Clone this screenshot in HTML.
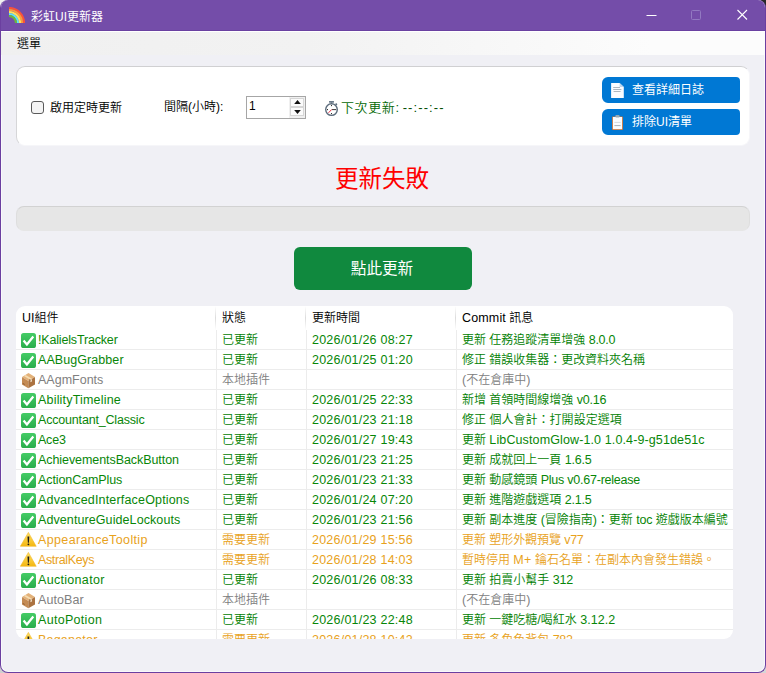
<!DOCTYPE html>
<html lang="zh-Hant"><head><meta charset="utf-8"><title>彩虹UI更新器</title>
<style>
html,body{margin:0;padding:0;}
html{background:#ffffff;}
body{width:766px;height:673px;overflow:hidden;position:relative;font-family:"Liberation Sans","Noto Sans CJK TC",sans-serif;font-size:12px;color:#000;font-weight:350;}
#win{position:absolute;left:0;top:0;width:766px;height:673px;box-sizing:border-box;border:1px solid #6b3fa0;border-top:none;border-radius:8px;background:#f0f0f5;overflow:hidden;box-shadow:inset 0 0 0 1px #f9f9fb;}
#win>*{position:absolute;}
#title{left:-1px;top:0;width:766px;height:31px;background:#744da9;border-bottom:1px solid #6a41a1;box-sizing:border-box;color:#fff;}
#title .t{font-weight:400;position:absolute;left:31px;top:2px;line-height:30px;font-size:12px;white-space:nowrap;}
#menu{left:0;top:31px;width:764px;height:24px;background:linear-gradient(90deg,#f0f0f0 0%,#f2f2f2 40%,#fcfcfc 85%,#fcfcfc 100%);border-top:1px solid #fff;box-sizing:border-box;}
#menu span{position:absolute;left:16px;top:2px;line-height:21px;font-size:12px;}
.panel{left:15px;top:66px;width:734px;height:80px;box-sizing:border-box;background:#fff;border:1px solid #d6d6d8;border-top-color:#d0d0d2;border-right-color:#f6f6f9;border-bottom-color:#f6f6f9;border-radius:9px;}
.cb{left:30px;top:101px;width:13px;height:13px;box-sizing:border-box;border:1px solid #5a5a5a;border-radius:3px;background:#f4f4f4;}
.lbl{white-space:nowrap;line-height:16px;}
.spin{left:245px;top:96px;width:60px;height:23px;box-sizing:border-box;border:1px solid #a6a6a6;background:#fff;}
.spin .v{position:absolute;left:2px;top:-1px;line-height:20px;font-size:12px;}
.spin .b{position:absolute;left:43px;width:14px;height:9px;background:#fbfbfb;border:1px solid #d6d6d6;box-sizing:border-box;}
.btn{left:601px;width:138px;height:26px;background:#0078d4;border-radius:6px 4px 4px 6px;color:#fff;}
.btn span{font-weight:400;position:absolute;left:30px;top:1px;line-height:25px;white-space:nowrap;}
.btn svg{position:absolute;left:8px;top:5px;width:15px;height:17px;}
#status{left:-1px;top:161px;width:764px;text-align:center;font-size:23.5px;font-weight:400;line-height:36px;color:#ff0000;white-space:nowrap;}
#prog{left:15px;top:206px;width:734px;height:25px;box-sizing:border-box;background:#e6e6e6;border:1px solid #dedede;border-top-color:#d2d2d2;border-bottom-color:#e6e6e6;border-radius:8px;}
#go{left:293px;top:247px;width:178px;height:43px;background:#10893e;border-radius:6px;color:#fff;font-size:15.6px;font-weight:400;line-height:43px;text-align:center;white-space:nowrap;text-indent:-2px;}
#tbl{left:15px;top:306px;width:717px;height:333px;background:#fff;border-radius:9px;overflow:hidden;}
#tbl>*{position:absolute;}
.th{top:0;height:24px;line-height:25px;white-space:nowrap;color:#000;}
.hs{top:0;width:1px;height:24px;background:linear-gradient(180deg,#fff 0%,#dcdcdc 50%,#fff 100%);}
.vl{top:24px;width:1px;height:320px;background:#ececec;}
.tr{left:0;width:717px;height:20px;box-sizing:border-box;border-bottom:1px solid #ececec;white-space:nowrap;line-height:21px;}
.tr>*{position:absolute;top:0;}

.c1{left:22px;font-size:12.5px;} .c2{left:206px;} .c3{left:296px;font-size:12.5px;letter-spacing:0.22px;} .c4{left:446px;width:271px;overflow:hidden;} .l{font-size:12.5px;}
.g{color:#008000;} .g .c1,.g .c3,.g .l{color:#078607;} .o{color:#e8a21c;} .y{color:#808080;}
</style></head><body>
<svg width="0" height="0" style="position:absolute"><defs><linearGradient id="gk" x1="0" y1="0" x2="0" y2="1"><stop offset="0" stop-color="#45cc66"/><stop offset="1" stop-color="#2aad4b"/></linearGradient><linearGradient id="gw" x1="0" y1="0" x2="0" y2="1"><stop offset="0" stop-color="#ffe066"/><stop offset="1" stop-color="#f4b70f"/></linearGradient></defs></svg>
<div style="position:absolute;left:0;top:0;width:10px;height:10px;background:#f0f0f0"></div><div style="position:absolute;left:756px;top:0;width:10px;height:10px;background:#282828"></div><div style="position:absolute;left:0;top:663px;width:10px;height:10px;background:#cfcfcf"></div><div style="position:absolute;left:756px;top:663px;width:10px;height:10px;background:#d6d6d6"></div>
<div id="win">
 <div id="title">
  <svg style="position:absolute;left:9px;top:7px" width="16" height="16" viewBox="0 0 16 16"><g fill="none" stroke-width="2.15"><path d="M0 1 A15 15 0 0 1 15 16" stroke="#f9523a"/><path d="M0 3 A13 13 0 0 1 13 16" stroke="#fb9b3c"/><path d="M0 5 A11 11 0 0 1 11 16" stroke="#fde15c"/><path d="M0 7 A9 9 0 0 1 9 16" stroke="#5de2fb"/><path d="M0 9 A7 7 0 0 1 7 16" stroke="#6bb93a"/></g></svg>
  <span class="t">彩虹UI更新器</span>
  <svg style="position:absolute;left:646px;top:9px" width="104" height="14" viewBox="0 0 104 14"><path d="M0.5 6.5 H10.5" stroke="#fff" stroke-width="1" fill="none"/><rect x="45.5" y="1.5" width="9" height="9" rx="1" fill="none" stroke="#9279c1" stroke-width="1"/><path d="M91.5 1 L101 10.5 M101 1 L91.5 10.5" stroke="#fff" stroke-width="1.1" fill="none"/></svg>
 </div>
 <div id="menu"><span>選單</span></div>

 <div class="panel"></div>
 <div class="cb"></div>
 <div class="lbl" style="left:49px;top:100px;">啟用定時更新</div>
 <div class="lbl" style="left:163px;top:99px;">間隔(小時):</div>
 <div class="spin"><span class="v">1</span>
  <div style="position:absolute;left:42px;top:0;width:16px;height:21px;background:#f0f0f0"></div>
  <div class="b" style="top:1px"><svg style="position:absolute;left:3px;top:1px" width="7" height="4" viewBox="0 0 7 4"><path d="M0.2 4 L3.5 0 L6.8 4 Z" fill="#111"/></svg></div>
  <div class="b" style="top:10px"><svg style="position:absolute;left:3px;top:2px" width="7" height="4" viewBox="0 0 7 4"><path d="M0.2 0 L3.5 4 L6.8 0 Z" fill="#111"/></svg></div>
 </div>
 <svg style="left:323px;top:100px" width="16" height="17" viewBox="0 0 16 17"><rect x="5" y="0.9" width="5" height="1.8" rx="0.4" fill="#6a7a8a"/><rect x="6.9" y="2.5" width="1.2" height="1.2" fill="#5b6b7b"/><path d="M11.6 3.6 L12.9 4.9" stroke="#5b6b7b" stroke-width="1.5"/><circle cx="7.5" cy="9.6" r="5.8" fill="#fff" stroke="#5b6b7b" stroke-width="1.4"/><circle cx="7.5" cy="5.6" r="0.55" fill="#111"/><circle cx="7.5" cy="13.6" r="0.55" fill="#111"/><circle cx="3.5" cy="9.6" r="0.55" fill="#111"/><path d="M7.8 9.6 H12.2" stroke="#222" stroke-width="0.9"/><path d="M7.6 9.6 L4.5 12.8" stroke="#e8283c" stroke-width="1"/></svg>
 <div class="lbl" style="left:340px;top:100px;font-size:13px;color:#046804;"><span style="letter-spacing:0.6px">下次更新</span>: <span style="letter-spacing:1.1px;color:#004c00">--:--:--</span></div>
 <div class="btn" style="top:77px"><svg viewBox="0 0 15 17"><path d="M1.1 1 H9.6 L13.8 5 V16 H1.1 Z" fill="#fafcff"/><path d="M9.6 1 V5 H13.8 Z" fill="#bcd6ee"/><path d="M3.2 5.5 H10 M3.2 7.5 H11.4 M3.6 9.5 H10.6" stroke="#a4aeb8" stroke-width="0.9"/></svg><span>查看詳細日誌</span></div>
 <div class="btn" style="top:109px"><svg viewBox="0 0 15 17"><rect x="2" y="2.6" width="11" height="13.5" rx="0.8" fill="#c4713a"/><rect x="2.9" y="3" width="9.2" height="12.2" fill="#fafcff"/><rect x="5.4" y="1.1" width="4.2" height="2.4" rx="0.8" fill="#98a8b4"/><path d="M4.4 8.4 H10.6" stroke="#d5dbe0" stroke-width="1"/><path d="M4.4 11.6 H10.6" stroke="#a8b0b8" stroke-width="1"/></svg><span>排除UI清單</span></div>

 <div id="status">更新失敗</div>
 <div id="prog"></div>
 <div id="go">點此更新</div>

 <div id="tbl">
  <div class="th" style="left:6px"><span class="l">UI</span>組件</div>
  <div class="th" style="left:206px">狀態</div>
  <div class="th" style="left:296px">更新時間</div>
  <div class="th" style="left:446px"><span class="l" style="letter-spacing:0.15px">Commit</span> 訊息</div>
  <div class="hs" style="left:199px"></div><div class="hs" style="left:289px"></div><div class="hs" style="left:439px"></div>
<div class="tr g" style="top:24px"><svg class="ic" style="left:5px;top:3px" width="15" height="15" viewBox="0 0 15 15"><rect x="0" y="0" width="15" height="15" rx="2.6" fill="url(#gk)"/><path d="M2.6 7.6 L5.9 11.4 L12.3 3.6" fill="none" stroke="#fff" stroke-width="2.3" stroke-linejoin="miter"/></svg><span class="c1" style="letter-spacing:-0.17px">!KalielsTracker</span><span class="c2">已更新</span><span class="c3">2026/01/26 08:27</span><span class="c4">更新 任務追蹤清單增強 <span class="l" style="letter-spacing:-0.24px">8.0.0</span></span></div>
<div class="tr g" style="top:44px"><svg class="ic" style="left:5px;top:3px" width="15" height="15" viewBox="0 0 15 15"><rect x="0" y="0" width="15" height="15" rx="2.6" fill="url(#gk)"/><path d="M2.6 7.6 L5.9 11.4 L12.3 3.6" fill="none" stroke="#fff" stroke-width="2.3" stroke-linejoin="miter"/></svg><span class="c1" style="letter-spacing:0.07px">AABugGrabber</span><span class="c2">已更新</span><span class="c3">2026/01/25 01:20</span><span class="c4" style="letter-spacing:-0.02px">修正 錯誤收集器：更改資料夾名稱</span></div>
<div class="tr y" style="top:64px"><svg class="ic" style="left:5px;top:3px" width="15" height="16" viewBox="0 0 15 16"><path d="M1 4.1 L7.5 0 L14 4.1 L7.3 7.9 Z" fill="#e3b27a"/><path d="M1 4.1 L7.3 7.9 L7.3 15.3 L1 11.6 Z" fill="#c48b54"/><path d="M14 4.1 L7.3 7.9 L7.3 15.3 L14 11.6 Z" fill="#ab7240"/><path d="M4.6 1.9 L11 5.8 L9.2 6.8 L2.9 2.9 Z" fill="#f6dcb0"/><path d="M9.4 6.9 L11 6 L11 8.4 L9.4 9.3 Z" fill="#ead8c0"/><rect x="8.3" y="6.5" width="1" height="1" fill="#5a3a20"/><path d="M1.8 10 L3.6 11 L3.6 11.9 L1.8 10.9 Z" fill="#8a5a30"/></svg><span class="c1" style="letter-spacing:-0.00px">AAgmFonts</span><span class="c2">本地插件</span><span class="c3"></span><span class="c4"><span class="l" style="letter-spacing:0.07px">(</span>不在倉庫中<span class="l" style="letter-spacing:0.07px">)</span></span></div>
<div class="tr g" style="top:84px"><svg class="ic" style="left:5px;top:3px" width="15" height="15" viewBox="0 0 15 15"><rect x="0" y="0" width="15" height="15" rx="2.6" fill="url(#gk)"/><path d="M2.6 7.6 L5.9 11.4 L12.3 3.6" fill="none" stroke="#fff" stroke-width="2.3" stroke-linejoin="miter"/></svg><span class="c1" style="letter-spacing:0.19px">AbilityTimeline</span><span class="c2">已更新</span><span class="c3">2026/01/25 22:33</span><span class="c4">新增 首領時間線增強 <span class="l" style="letter-spacing:-0.21px">v0.16</span></span></div>
<div class="tr g" style="top:104px"><svg class="ic" style="left:5px;top:3px" width="15" height="15" viewBox="0 0 15 15"><rect x="0" y="0" width="15" height="15" rx="2.6" fill="url(#gk)"/><path d="M2.6 7.6 L5.9 11.4 L12.3 3.6" fill="none" stroke="#fff" stroke-width="2.3" stroke-linejoin="miter"/></svg><span class="c1" style="letter-spacing:-0.18px">Accountant_Classic</span><span class="c2">已更新</span><span class="c3">2026/01/23 21:18</span><span class="c4" style="letter-spacing:0.03px">修正 個人會計：打開設定選項</span></div>
<div class="tr g" style="top:124px"><svg class="ic" style="left:5px;top:3px" width="15" height="15" viewBox="0 0 15 15"><rect x="0" y="0" width="15" height="15" rx="2.6" fill="url(#gk)"/><path d="M2.6 7.6 L5.9 11.4 L12.3 3.6" fill="none" stroke="#fff" stroke-width="2.3" stroke-linejoin="miter"/></svg><span class="c1" style="letter-spacing:-0.22px">Ace3</span><span class="c2">已更新</span><span class="c3">2026/01/27 19:43</span><span class="c4">更新 <span class="l" style="letter-spacing:0.12px">LibCustomGlow-1.0 1.0.4-9-g51de51c</span></span></div>
<div class="tr g" style="top:144px"><svg class="ic" style="left:5px;top:3px" width="15" height="15" viewBox="0 0 15 15"><rect x="0" y="0" width="15" height="15" rx="2.6" fill="url(#gk)"/><path d="M2.6 7.6 L5.9 11.4 L12.3 3.6" fill="none" stroke="#fff" stroke-width="2.3" stroke-linejoin="miter"/></svg><span class="c1" style="letter-spacing:-0.07px">AchievementsBackButton</span><span class="c2">已更新</span><span class="c3">2026/01/23 21:25</span><span class="c4">更新 成就回上一頁 <span class="l" style="letter-spacing:-0.20px">1.6.5</span></span></div>
<div class="tr g" style="top:164px"><svg class="ic" style="left:5px;top:3px" width="15" height="15" viewBox="0 0 15 15"><rect x="0" y="0" width="15" height="15" rx="2.6" fill="url(#gk)"/><path d="M2.6 7.6 L5.9 11.4 L12.3 3.6" fill="none" stroke="#fff" stroke-width="2.3" stroke-linejoin="miter"/></svg><span class="c1" style="letter-spacing:-0.09px">ActionCamPlus</span><span class="c2">已更新</span><span class="c3">2026/01/23 21:33</span><span class="c4">更新 動感鏡頭 <span class="l" style="letter-spacing:-0.23px">Plus v0.67-release</span></span></div>
<div class="tr g" style="top:184px"><svg class="ic" style="left:5px;top:3px" width="15" height="15" viewBox="0 0 15 15"><rect x="0" y="0" width="15" height="15" rx="2.6" fill="url(#gk)"/><path d="M2.6 7.6 L5.9 11.4 L12.3 3.6" fill="none" stroke="#fff" stroke-width="2.3" stroke-linejoin="miter"/></svg><span class="c1" style="letter-spacing:0.17px">AdvancedInterfaceOptions</span><span class="c2">已更新</span><span class="c3">2026/01/24 07:20</span><span class="c4">更新 進階遊戲選項 <span class="l" style="letter-spacing:-0.20px">2.1.5</span></span></div>
<div class="tr g" style="top:204px"><svg class="ic" style="left:5px;top:3px" width="15" height="15" viewBox="0 0 15 15"><rect x="0" y="0" width="15" height="15" rx="2.6" fill="url(#gk)"/><path d="M2.6 7.6 L5.9 11.4 L12.3 3.6" fill="none" stroke="#fff" stroke-width="2.3" stroke-linejoin="miter"/></svg><span class="c1" style="letter-spacing:0.09px">AdventureGuideLockouts</span><span class="c2">已更新</span><span class="c3">2026/01/23 21:56</span><span class="c4">更新 副本進度 <span class="l" style="letter-spacing:-0.12px">(</span>冒險指南<span class="l" style="letter-spacing:-0.12px">)</span>：更新 <span class="l" style="letter-spacing:-0.12px">toc</span> 遊戲版本編號</span></div>
<div class="tr o" style="top:224px"><svg class="ic" style="left:4px;top:2px" width="17" height="15" viewBox="0 0 17 15"><path d="M8.4 0.4 L16.2 14.3 L0.4 14.3 Z" fill="url(#gw)" stroke="#f2b928" stroke-width="0.6" stroke-linejoin="round"/><path d="M7.5 4.6 H9.3 L8.9 10.8 H7.9 Z" fill="#1a1a1a"/><circle cx="8.4" cy="12.3" r="0.9" fill="#1a1a1a"/></svg><span class="c1" style="letter-spacing:0.37px">AppearanceTooltip</span><span class="c2">需要更新</span><span class="c3">2026/01/29 15:56</span><span class="c4" style="letter-spacing:-0.04px">更新 塑形外觀預覽 <span class="l" style="letter-spacing:-0.34px">v77</span></span></div>
<div class="tr o" style="top:244px"><svg class="ic" style="left:4px;top:2px" width="17" height="15" viewBox="0 0 17 15"><path d="M8.4 0.4 L16.2 14.3 L0.4 14.3 Z" fill="url(#gw)" stroke="#f2b928" stroke-width="0.6" stroke-linejoin="round"/><path d="M7.5 4.6 H9.3 L8.9 10.8 H7.9 Z" fill="#1a1a1a"/><circle cx="8.4" cy="12.3" r="0.9" fill="#1a1a1a"/></svg><span class="c1" style="letter-spacing:-0.37px">AstralKeys</span><span class="c2">需要更新</span><span class="c3">2026/01/28 14:03</span><span class="c4">暫時停用 <span class="l" style="letter-spacing:0.25px">M+</span> 鑰石名單：在副本內會發生錯誤。</span></div>
<div class="tr g" style="top:264px"><svg class="ic" style="left:5px;top:3px" width="15" height="15" viewBox="0 0 15 15"><rect x="0" y="0" width="15" height="15" rx="2.6" fill="url(#gk)"/><path d="M2.6 7.6 L5.9 11.4 L12.3 3.6" fill="none" stroke="#fff" stroke-width="2.3" stroke-linejoin="miter"/></svg><span class="c1" style="letter-spacing:0.31px">Auctionator</span><span class="c2">已更新</span><span class="c3">2026/01/26 08:33</span><span class="c4">更新 拍賣小幫手 <span class="l" style="letter-spacing:-0.11px">312</span></span></div>
<div class="tr y" style="top:284px"><svg class="ic" style="left:5px;top:3px" width="15" height="16" viewBox="0 0 15 16"><path d="M1 4.1 L7.5 0 L14 4.1 L7.3 7.9 Z" fill="#e3b27a"/><path d="M1 4.1 L7.3 7.9 L7.3 15.3 L1 11.6 Z" fill="#c48b54"/><path d="M14 4.1 L7.3 7.9 L7.3 15.3 L14 11.6 Z" fill="#ab7240"/><path d="M4.6 1.9 L11 5.8 L9.2 6.8 L2.9 2.9 Z" fill="#f6dcb0"/><path d="M9.4 6.9 L11 6 L11 8.4 L9.4 9.3 Z" fill="#ead8c0"/><rect x="8.3" y="6.5" width="1" height="1" fill="#5a3a20"/><path d="M1.8 10 L3.6 11 L3.6 11.9 L1.8 10.9 Z" fill="#8a5a30"/></svg><span class="c1" style="letter-spacing:0.08px">AutoBar</span><span class="c2">本地插件</span><span class="c3"></span><span class="c4"><span class="l" style="letter-spacing:0.07px">(</span>不在倉庫中<span class="l" style="letter-spacing:0.07px">)</span></span></div>
<div class="tr g" style="top:304px"><svg class="ic" style="left:5px;top:3px" width="15" height="15" viewBox="0 0 15 15"><rect x="0" y="0" width="15" height="15" rx="2.6" fill="url(#gk)"/><path d="M2.6 7.6 L5.9 11.4 L12.3 3.6" fill="none" stroke="#fff" stroke-width="2.3" stroke-linejoin="miter"/></svg><span class="c1" style="letter-spacing:0.30px">AutoPotion</span><span class="c2">已更新</span><span class="c3">2026/01/23 22:48</span><span class="c4">更新 一鍵吃糖<span class="l" style="letter-spacing:0.04px">/</span>喝紅水 <span class="l" style="letter-spacing:0.04px">3.12.2</span></span></div>
<div class="tr o" style="top:324px"><svg class="ic" style="left:4px;top:2px" width="17" height="15" viewBox="0 0 17 15"><path d="M8.4 0.4 L16.2 14.3 L0.4 14.3 Z" fill="url(#gw)" stroke="#f2b928" stroke-width="0.6" stroke-linejoin="round"/><path d="M7.5 4.6 H9.3 L8.9 10.8 H7.9 Z" fill="#1a1a1a"/><circle cx="8.4" cy="12.3" r="0.9" fill="#1a1a1a"/></svg><span class="c1" style="letter-spacing:0.21px">Baganator</span><span class="c2">需要更新</span><span class="c3">2026/01/28 10:42</span><span class="c4">更新 多角色背包 <span class="l" style="letter-spacing:-0.31px">782</span></span></div>
  <div class="vl" style="left:200px"></div><div class="vl" style="left:290px"></div><div class="vl" style="left:440px"></div>
 </div>
</div>
</body></html>
